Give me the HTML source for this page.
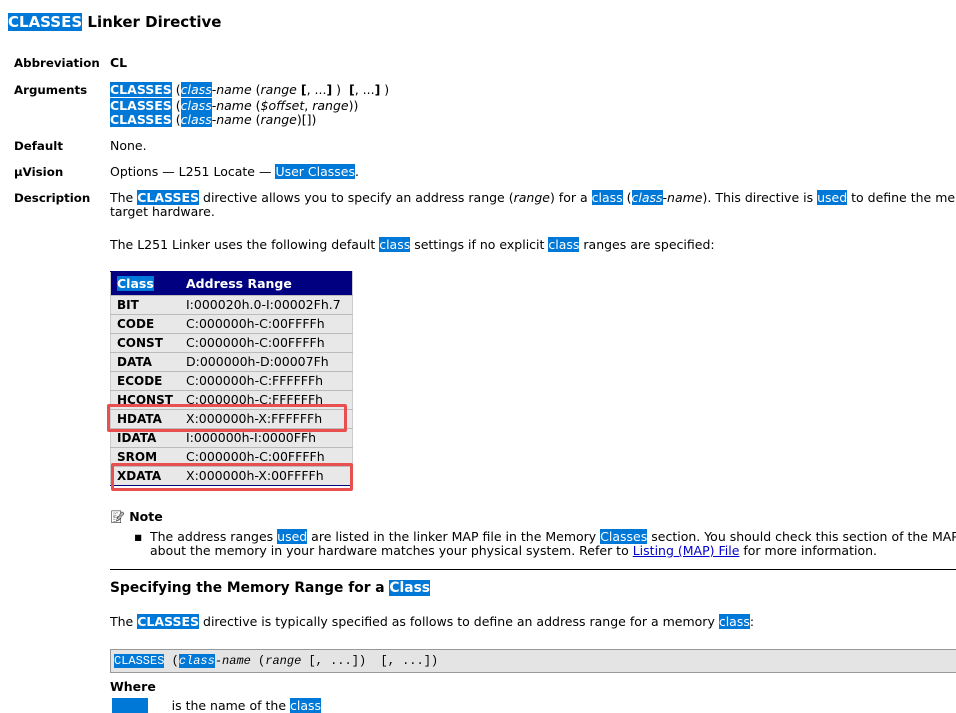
<!DOCTYPE html>
<html><head><meta charset="utf-8">
<style>
body{margin:0;width:956px;height:705px;overflow:hidden;background:#fff;font-family:"DejaVu Sans","Liberation Sans",sans-serif;font-size:12.5px;color:#000;position:relative}
.a{position:absolute;white-space:nowrap;line-height:14px}
.h{background:#0078d7;color:#fff}
b{font-weight:bold}
.l{font-size:11.8px}
.t{position:absolute;left:110px;top:271px;width:243px;border-collapse:collapse;border:1px solid #000080;border-left-color:#ccc;border-right-color:#ccc;font-size:12.5px}
.t td,.t th{padding:0 6px;height:18px;line-height:18px;text-align:left;border-top:1px solid #bbb;white-space:nowrap}
.t th{background:#000080;color:#fff;height:23px;border:none}
.t td{background:#e8e8e8}
.t td:first-child{font-weight:bold;width:57px;font-size:12px}
.red{position:absolute;border:3px solid #e85050;border-radius:2px}
code{font-family:"Liberation Mono","DejaVu Sans Mono",monospace;font-size:12px}
</style></head><body>
<div class="a" style="left:8px;top:13px;font-size:15px;font-weight:bold;line-height:19px"><span class="h">CLASSES</span> Linker Directive</div>

<div class="a" style="left:14px;top:56px"><b class="l">Abbreviation</b></div>
<div class="a" style="left:110px;top:56px"><b>CL</b></div>

<div class="a" style="left:14px;top:83px"><b class="l">Arguments</b></div>
<div class="a" style="left:110px;top:83px"><b class="h">CLASSES</b> (<i class="h">class</i><i>-name</i> (<i>range</i> <b>[</b>, ...<b>]</b> ) &nbsp;<b>[</b>, ...<b>]</b> )</div>
<div class="a" style="left:110px;top:99px"><b class="h">CLASSES</b> (<i class="h">class</i><i>-name</i> (<i>$offset</i>, <i>range</i>))</div>
<div class="a" style="left:110px;top:113px"><b class="h">CLASSES</b> (<i class="h">class</i><i>-name</i> (<i>range</i>)[])</div>

<div class="a" style="left:14px;top:139px"><b class="l">Default</b></div>
<div class="a" style="left:110px;top:139px">None.</div>

<div class="a" style="left:14px;top:165px"><b class="l">µVision</b></div>
<div class="a" style="left:110px;top:165px">Options — L251 Locate — <span class="h">User Classes</span>.</div>

<div class="a" style="left:14px;top:191px"><b class="l">Description</b></div>
<div class="a" style="left:110px;top:191px">The <b class="h">CLASSES</b> directive allows you to specify an address range (<i>range</i>) for a <span class="h">class</span> (<i class="h">class</i><i>-name</i>). This directive is <span class="h">used</span> to define the memory</div>
<div class="a" style="left:110px;top:205px">target hardware.</div>

<div class="a" style="left:110px;top:238px">The L251 Linker uses the following default <span class="h">class</span> settings if no explicit <span class="h">class</span> ranges are specified:</div>

<table class="t">
<tr><th><span class="h">Class</span></th><th>Address Range</th></tr>
<tr><td>BIT</td><td>I:000020h.0-I:00002Fh.7</td></tr>
<tr><td>CODE</td><td>C:000000h-C:00FFFFh</td></tr>
<tr><td>CONST</td><td>C:000000h-C:00FFFFh</td></tr>
<tr><td>DATA</td><td>D:000000h-D:00007Fh</td></tr>
<tr><td>ECODE</td><td>C:000000h-C:FFFFFFh</td></tr>
<tr><td>HCONST</td><td>C:000000h-C:FFFFFFh</td></tr>
<tr><td>HDATA</td><td>X:000000h-X:FFFFFFh</td></tr>
<tr><td>IDATA</td><td>I:000000h-I:0000FFh</td></tr>
<tr><td>SROM</td><td>C:000000h-C:00FFFFh</td></tr>
<tr><td>XDATA</td><td>X:000000h-X:00FFFFh</td></tr>
</table>
<div class="red" style="left:107px;top:404px;width:234px;height:22px"></div>
<div class="red" style="left:111px;top:463px;width:236px;height:22px"></div>

<div class="a" style="left:110px;top:510px"><span style="font-size:12px">&#x1F4DD;&#xFE0E;</span> <b>Note</b></div>
<div class="a" style="left:134px;top:530px">&#9642;</div>
<div class="a" style="left:150px;top:530px">The address ranges <span class="h">used</span> are listed in the linker MAP file in the Memory <span class="h">Classes</span> section. You should check this section of the MAP file</div>
<div class="a" style="left:150px;top:544px">about the memory in your hardware matches your physical system. Refer to <span style="color:#00c;text-decoration:underline">Listing (MAP) File</span> for more information.</div>

<div style="position:absolute;left:110px;top:569px;width:846px;height:1px;background:#000"></div>
<div class="a" style="left:110px;top:579px;font-size:13.8px;font-weight:bold;line-height:18px">Specifying the Memory Range for a <span class="h">Class</span></div>

<div class="a" style="left:110px;top:615px">The <b class="h">CLASSES</b> directive is typically specified as follows to define an address range for a memory <span class="h">class</span>:</div>

<div style="position:absolute;left:110px;top:649px;width:846px;height:22px;background:#e4e4e4;border:1px solid #999;border-right:none"></div>
<div class="a" style="left:114px;top:653px"><code><span class="h">CLASSES</span> (<i class="h">class</i><i>-name</i> (<i>range</i> [, ...]) &nbsp;[, ...])</code></div>

<div class="a" style="left:110px;top:680px"><b>Where</b></div>
<div class="a" style="left:112px;top:699px"><span class="h">&nbsp;&nbsp;&nbsp;&nbsp;&nbsp;&nbsp;&nbsp;&nbsp;&nbsp;</span> &nbsp;&nbsp;&nbsp;&nbsp; is the name of the <span class="h">class</span></div>
</body></html>
